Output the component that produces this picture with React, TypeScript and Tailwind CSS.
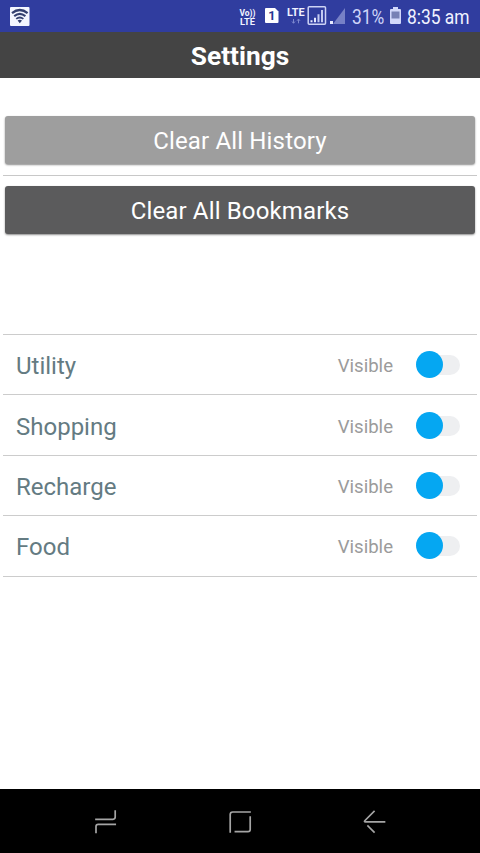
import { useState } from 'react';

interface Category {
  id: string;
  name: string;
}

const categories: Category[] = [
  { id: 'utility', name: 'Utility' },
  { id: 'shopping', name: 'Shopping' },
  { id: 'recharge', name: 'Recharge' },
  { id: 'food', name: 'Food' },
];

function StatusBar() {
  return (
    <div className="flex h-8 shrink-0 items-start bg-[#303d9f] text-white">
      <svg className="ml-[10px] mt-[7px] h-[19px] w-5 shrink-0" viewBox="0 0 20 19" fill="none">
        <rect width="19.5" height="19" rx="1" fill="#f4f6ff" />
        <path d="M2 6.2Q9.8-.2 17.6 6.2" stroke="#34406f" strokeWidth="2.2" />
        <path d="M4.2 9.1Q9.8 4.6 15.4 9.1" stroke="#34406f" strokeWidth="2" />
        <path d="M6.2 11.9Q9.8 9.1 13.4 11.9" stroke="#34406f" strokeWidth="1.8" />
        <path d="M7.6 13.6Q9.8 12 12 13.6L9.8 16.2Z" fill="#34406f" />
      </svg>
      {/* VoLTE, SIM slot and signal indicators */}
      <svg className="ml-[209px] h-8 w-[108px] shrink-0" viewBox="239 0 108 32" fill="none" fontFamily="Roboto, sans-serif" fontWeight="700">
        <text x="239.5" y="15.8" fontSize="8.8" fill="#f1f3ff" textLength="16" lengthAdjust="spacingAndGlyphs">Vo))</text>
        <text x="240" y="24.6" fontSize="8.8" fill="#f1f3ff" textLength="15" lengthAdjust="spacingAndGlyphs">LTE</text>
        <path d="M266 8h9l3.5 3.5V22q0 1-1 1H266q-1 0-1-1V9q0-1 1-1z" fill="#fff" />
        <text x="268.3" y="20" fontSize="12.5" fill="#27358f">1</text>
        <text x="287" y="16" fontSize="11" fill="#f1f3ff" textLength="17.5" lengthAdjust="spacingAndGlyphs">LTE</text>
        <path d="M293.5 19v4M292 21.5l1.5 1.8 1.5-1.8M298.5 23.3v-4M297 20.8l1.5-1.8 1.5 1.8" stroke="#7d88cf" strokeWidth="1" />
        <rect x="308.2" y="6.7" width="17.3" height="17.6" rx="1" stroke="#cdd3f5" strokeWidth="1.5" />
        <path d="M311.5 22.2v-2M315 22.2v-4.500" stroke="#e8ebff" strokeWidth="2" />
        <path d="M318.5 22.2v-8M322 22.2V10" stroke="#c3caf2" strokeWidth="2" />
        <path d="M345 8v16h-12z" fill="#7781c6" />
        <rect x="330" y="21" width="3" height="3" fill="#e8ebff" />
      </svg>
      <span className="ml-[5px] mt-[3px] w-[34px] origin-left scale-x-[0.87] whitespace-nowrap text-[20px] leading-7 text-[#ced4f8]">31%</span>
      <svg className="ml-1 mt-[7px] h-[18px] w-[11px] shrink-0" viewBox="0 0 11 18">
        <path d="M3 0h5v2h2q1 0 1 1v13q0 1-1 1H1q-1 0-1-1V3q0-1 1-1h2z" fill="#d2d8fa" />
        <rect x="1.5" y="4.5" width="8" height="7" fill="#7781b5" />
      </svg>
      <span className="ml-[6px] mt-[3px] origin-left scale-x-[0.87] whitespace-nowrap text-[20px] leading-7 text-[#f1f3ff]">8:35 am</span>
    </div>
  );
}

function Toggle({ on, onClick }: { on: boolean; onClick: () => void }) {
  return (
    <button
      onClick={onClick}
      aria-pressed={on}
      className="relative ml-[26px] mr-[17px] mt-px h-5 w-[41px] rounded-full bg-[#eeeff1]"
    >
      <span className={`absolute -top-[4px] h-[27px] w-[27px] rounded-full bg-[#05a7f2] ${on ? '-left-[3.5px]' : 'left-[18px]'}`} />
    </button>
  );
}

function NavBar() {
  return (
    <nav className="flex h-16 shrink-0 items-center justify-between bg-black px-[93px] pt-[2px] text-[#a5a5a5]">
      <button title="Recent apps">
        <svg width="24" height="26" viewBox="93 809 24 26" fill="none" stroke="currentColor" strokeWidth="1.7" strokeLinecap="square">
          <path d="M96 819.3h17q2.2 0 2.2-2.2v-6M96 832.5v-6q0-2.2 2.2-2.2h17" />
        </svg>
      </button>
      <button title="Home">
        <svg width="24" height="26" viewBox="228 809 24 26" fill="none" stroke="currentColor" strokeWidth="1.7" strokeLinecap="square">
          <path d="M230.2 832v-17.5q0-2.5 2.5-2.5H250M250.2 817v12.500q0 2.2-2.2 2.2h-12.6" />
        </svg>
      </button>
      <button title="Back">
        <svg width="24" height="26" viewBox="363 809 24 26" fill="none" stroke="currentColor" strokeWidth="1.7" strokeLinecap="square">
          <path d="M374 811.5l-9 9q-1.3 1.4.5 1.4H384.500M368 826l6 6" />
        </svg>
      </button>
    </nav>
  );
}

export default function App() {
  const [visible, setVisible] = useState<Record<string, boolean>>({
    utility: true,
    shopping: true,
    recharge: true,
    food: true,
  });

  const toggleCategory = (id: string) => {
    setVisible(prev => ({ ...prev, [id]: !prev[id] }));
  };

  return (
    <div className="flex h-[853px] w-[480px] flex-col overflow-hidden bg-white font-['Roboto',sans-serif]">
      <StatusBar />
      <header className="flex h-[46px] shrink-0 items-center justify-center bg-[#444444] pt-[2px]">
        <h1 className="text-[26.3px] leading-none font-bold text-white">Settings</h1>
      </header>

      <main className="flex-1 px-[3px] pt-[38px]">
        <div className="border-b border-[#c8c8c8] px-[2px] pb-[11px]">
          <button className="block h-12 w-full rounded-[3px] bg-[#9e9e9e] pt-[2px] text-[24px] tracking-[0.15px] text-white shadow-[0_1px_2px_rgba(0,0,0,0.45)]">
            Clear All History
          </button>
        </div>
        <div className="px-[2px] pt-[10px]">
          <button className="block h-12 w-full rounded-[3px] bg-[#5b5b5c] pt-[2px] text-[24px] tracking-[0.15px] text-white shadow-[0_1px_2px_rgba(0,0,0,0.45)]">
            Clear All Bookmarks
          </button>
        </div>

        <ul className="mt-[100px] border-t border-[#cccccc]">
          {categories.map(category => (
            <li key={category.id} className="flex h-[60.4px] items-center border-b border-[#cccccc] pl-[13px]">
              <span className="pt-[3px] text-[24px] text-[#647b82]">{category.name}</span>
              <span className="ml-auto pt-[5px] text-[18.6px] text-[#9b9b9b]">{visible[category.id] ? 'Visible' : 'Hidden'}</span>
              <Toggle on={visible[category.id]} onClick={() => toggleCategory(category.id)} />
            </li>
          ))}
        </ul>
      </main>

      <NavBar />
    </div>
  );
}
